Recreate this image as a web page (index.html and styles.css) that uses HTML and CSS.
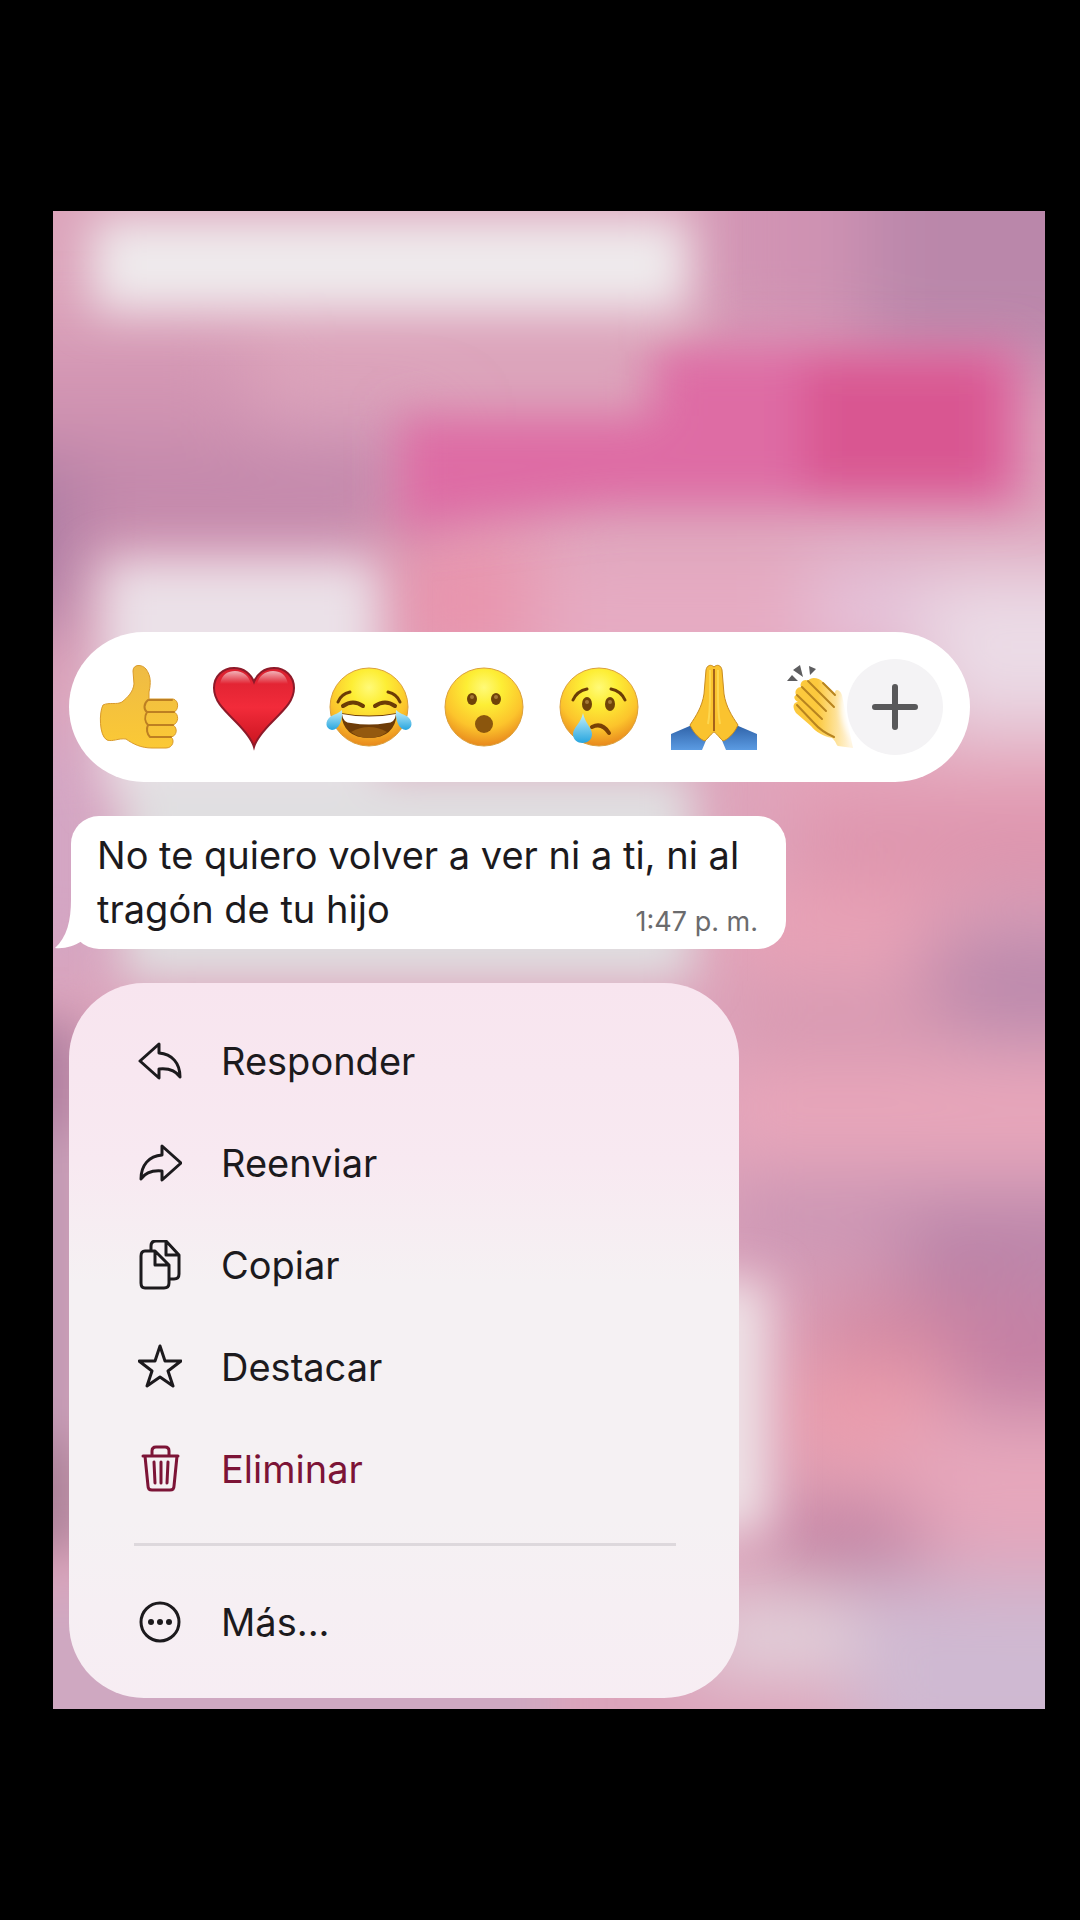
FILE: index.html
```html
<!DOCTYPE html>
<html lang="es">
<head>
    <meta charset="UTF-8">
    <meta name="viewport" content="width=device-width, initial-scale=1.0">
    <title>Mensaje</title>
    <link rel="stylesheet" href="styles.css">
</head>
<body>
    <main class="screen">
        <!-- Fondo del chat desenfocado -->
        <svg class="backdrop" viewBox="0 0 992 1498" preserveAspectRatio="none" aria-hidden="true">
            <defs>
                <filter id="soft" x="-50%" y="-50%" width="200%" height="200%"><feGaussianBlur stdDeviation="23"/></filter>
                <filter id="wide" x="-50%" y="-50%" width="200%" height="200%"><feGaussianBlur stdDeviation="38"/></filter>
            </defs>
            <rect width="992" height="1498" fill="#dca4bb"/>
            <g filter="url(#wide)">
                <rect x="655" y="-90" width="190" height="230" fill="#d093b3"/>
                <rect x="810" y="-90" width="280" height="250" fill="#ba87aa"/>
                <rect x="-90" y="130" width="290" height="130" fill="#d294b2"/>
                <rect x="200" y="210" width="180" height="60" fill="#d79bbb"/>
                <rect x="-60" y="230" width="420" height="110" fill="#c388ab"/>
                <rect x="-90" y="250" width="110" height="170" fill="#aa7aa2"/>
                <rect x="-90" y="520" width="150" height="240" fill="#d3a6c4"/>
                <rect x="340" y="320" width="160" height="140" fill="#e994ad"/>
                <rect x="480" y="340" width="340" height="140" fill="#e6abc2"/>
                <rect x="760" y="350" width="310" height="90" fill="#e5c5dc"/>
                <rect x="870" y="360" width="230" height="160" fill="#ebdbe6"/>
                <rect x="700" y="545" width="390" height="50" fill="#e8a4ba"/>
                <rect x="740" y="595" width="350" height="80" fill="#db93ac"/>
                <rect x="680" y="670" width="220" height="90" fill="#e9a2b6"/>
                <rect x="870" y="720" width="220" height="110" fill="#bc89ac"/>
                <rect x="680" y="785" width="220" height="55" fill="#d695ae"/>
                <rect x="660" y="860" width="430" height="80" fill="#eaa6ba"/>
                <rect x="670" y="970" width="420" height="80" fill="#ca94b3"/>
                <rect x="850" y="1000" width="240" height="80" fill="#b983a8"/>
                <rect x="760" y="1080" width="200" height="70" fill="#d086a1"/>
                <rect x="900" y="1090" width="190" height="110" fill="#c47fa3"/>
                <rect x="730" y="1150" width="160" height="110" fill="#ea9cac"/>
                <rect x="840" y="1220" width="250" height="110" fill="#e7a7bc"/>
                <rect x="720" y="1300" width="150" height="60" fill="#bc799c"/>
                <rect x="640" y="1390" width="200" height="70" fill="#e3dae1"/>
                <rect x="800" y="1370" width="290" height="190" fill="#cfb9d2"/>
            </g>
            <g filter="url(#soft)">
                <rect x="40" y="8" width="595" height="92" fill="#efebed"/>
                <path d="M345 205H600V135H970V295H560L345 320Z" fill="#de6ca4"/>
                <rect x="750" y="150" width="195" height="130" fill="#d95791"/>
                <rect x="50" y="350" width="275" height="235" fill="#ebe1e8"/>
                <rect x="70" y="560" width="570" height="210" fill="#e0dfe1"/>
                <rect x="590" y="1070" width="125" height="250" fill="#eee2e6"/>
                <rect x="-60" y="810" width="90" height="110" fill="#b080a0"/>
                <rect x="-60" y="920" width="90" height="360" fill="#c19ab4"/>
                <rect x="-60" y="1230" width="90" height="110" fill="#ab8299"/>
                <rect x="-60" y="1380" width="560" height="180" fill="#cfa8c1"/>
            </g>
        </svg>

        <div class="reactions" role="toolbar" aria-label="Reacciones">
            <button class="reaction" aria-label="Me gusta">
                <svg viewBox="0 0 80 86">
                    <defs>
                        <linearGradient id="hand" x1="0" y1="0" x2="0" y2="1">
                            <stop offset="0" stop-color="#eebb45"/>
                            <stop offset="1" stop-color="#fbc935"/>
                        </linearGradient>
                    </defs>
                    <path d="M4 41C10 38 18 41 23 38C29 33 34 28 35 20L34 7C34 0 43 0 47 5C52 12 52 19 50 28L50 35H74C80 36 80 46 75 48C80 50 80 59 74 61C79 64 78 72 72 73C76 76 74 84 67 84H53C42 84 34 80 27 75C19 74 14 78 8 76C0 72 0 48 4 41Z" fill="url(#hand)" stroke="#d99a2b" stroke-width="1"/>
                    <path d="M49 36C44 40 45 46 48 48C45 53 46 58 49 61C47 65 48 70 51 73M50 36H73M48 48H75M49 61H74M51 73H72" fill="none" stroke="#bd7f22" stroke-width="2" stroke-linecap="round"/>
                </svg>
            </button>
            <button class="reaction" aria-label="Me encanta">
                <svg viewBox="0 0 80 86">
                    <defs>
                        <linearGradient id="heart" x1="0" y1="0" x2="0" y2="1">
                            <stop offset="0" stop-color="#d9202f"/>
                            <stop offset=".5" stop-color="#f22b3a"/>
                            <stop offset="1" stop-color="#c9141f"/>
                        </linearGradient>
                        <linearGradient id="shine" x1="0" y1="0" x2="0" y2="1">
                            <stop offset="0" stop-color="#fff" stop-opacity=".65"/>
                            <stop offset="1" stop-color="#fff" stop-opacity="0"/>
                        </linearGradient>
                    </defs>
                    <path d="M40 83C38 76 31 67 21 57C8 44 0 36 0 24C0 12 9 4 20 4C30 4 37 10 40 18C43 10 50 4 60 4C71 4 80 12 80 24C80 36 72 44 59 57C49 67 42 76 40 83Z" fill="url(#heart)" stroke="#8d1a29" stroke-width="2"/>
                    <path d="M6 20C8 10 14 7 21 7C29 7 35 12 37 20Z M43 20C45 12 51 7 59 7C66 7 72 10 74 20Z" fill="url(#shine)"/>
                </svg>
            </button>
            <button class="reaction" aria-label="Me divierte">
                <svg viewBox="0 0 80 86">
                    <defs>
                        <radialGradient id="face" cx=".5" cy=".25" r=".75">
                            <stop offset="0" stop-color="#fffa78"/>
                            <stop offset=".3" stop-color="#fdee35"/>
                            <stop offset=".7" stop-color="#fcc42c"/>
                            <stop offset="1" stop-color="#e8881d"/>
                        </radialGradient>
                        <linearGradient id="tear" x1="0" y1="0" x2="0" y2="1">
                            <stop offset="0" stop-color="#c4f0fb"/>
                            <stop offset="1" stop-color="#27a5df"/>
                        </linearGradient>
                    </defs>
                    <circle cx="40" cy="43" r="39" fill="url(#face)" stroke="#dba03b" stroke-width="1"/>
                    <path d="M9 38Q12 30 21 28M59 28Q68 30 71 38" fill="none" stroke="#6b3c06" stroke-width="3" stroke-linecap="round"/>
                    <path d="M14 42Q24 35 34 42M46 42Q56 35 66 42" fill="none" stroke="#6b3c06" stroke-width="4" stroke-linecap="round"/>
                    <path d="M12 49Q40 54 68 49Q66 74 40 74Q14 74 12 49Z" fill="#6e3c07"/>
                    <path d="M13 50Q40 55 67 50Q66 59 58 59Q40 62 22 59Q14 59 13 50Z" fill="#fff"/>
                    <path d="M22 68Q40 58 58 68Q50 74 40 74Q30 74 22 68Z" fill="#94590f"/>
                    <path d="M13 46C14 56 10 66 3 66C-4 65-4 57 1 53C5 50 9 50 13 46ZM67 46C66 56 70 66 77 66C84 65 84 57 79 53C75 50 71 50 67 46Z" fill="url(#tear)"/>
                </svg>
            </button>
            <button class="reaction" aria-label="Me asombra">
                <svg viewBox="0 0 80 86">
                    <circle cx="40" cy="43" r="39" fill="url(#face)" stroke="#dba03b" stroke-width="1"/>
                    <ellipse cx="28" cy="35" rx="5" ry="6" fill="#6f4309"/>
                    <ellipse cx="52" cy="35" rx="5" ry="6" fill="#6f4309"/>
                    <circle cx="28" cy="33" r="2" fill="#a47937"/>
                    <circle cx="52" cy="33" r="2" fill="#a47937"/>
                    <circle cx="40" cy="60" r="9" fill="#8b560d"/>
                </svg>
            </button>
            <button class="reaction" aria-label="Me entristece">
                <svg viewBox="0 0 80 86">
                    <circle cx="40" cy="43" r="39" fill="url(#face)" stroke="#dba03b" stroke-width="1"/>
                    <path d="M14 36Q18 27 28 25M52 25Q62 27 66 36" fill="none" stroke="#6b3c06" stroke-width="3" stroke-linecap="round"/>
                    <ellipse cx="28" cy="40" rx="5" ry="7" fill="#6f4309"/>
                    <ellipse cx="51" cy="40" rx="5" ry="7" fill="#6f4309"/>
                    <circle cx="28" cy="38" r="2" fill="#a47937"/>
                    <circle cx="51" cy="38" r="2" fill="#a47937"/>
                    <path d="M33 63Q43 58 50 69" fill="none" stroke="#784006" stroke-width="4" stroke-linecap="round"/>
                    <path d="M24 49C26 59 33 64 33 70C33 82 14 82 14 70C14 64 22 59 24 49Z" fill="url(#tear)"/>
                </svg>
            </button>
            <button class="reaction" aria-label="Gracias">
                <svg viewBox="0 0 80 86">
                    <defs>
                        <linearGradient id="sleeve" x1="0" y1="0" x2="0" y2="1">
                            <stop offset="0" stop-color="#2f62a8"/>
                            <stop offset="1" stop-color="#5b9be2"/>
                        </linearGradient>
                    </defs>
                    <path d="M-3 70L18 61L33 74L28 86H-3ZM83 70L62 61L47 74L52 86H83Z" fill="url(#sleeve)"/>
                    <path d="M40 3C37 0 33 1 32 6L30 30C28 43 22 52 16 61C20 70 27 76 31 77C35 73 38 69 40 68C42 69 45 73 49 77C53 76 60 70 64 61C58 52 52 43 50 30L48 6C47 1 43 0 40 3Z" fill="#fac32f" stroke="#c98c20" stroke-width="1"/>
                    <path d="M40 5V67" stroke="#a5621a" stroke-width="2"/>
                    <path d="M36 6V28C36 40 36 50 34 60M44 6V28C44 40 44 50 46 60" fill="none" stroke="#fdd750" stroke-width="2"/>
                </svg>
            </button>
            <button class="reaction" aria-label="Aplausos">
                <svg viewBox="0 0 80 86">
                    <defs>
                        <linearGradient id="clap" x1="0" y1="0" x2="1" y2="0">
                            <stop offset=".4" stop-color="#fcc93d"/>
                            <stop offset=".95" stop-color="#fff4dc"/>
                        </linearGradient>
                    </defs>
                    <path d="M-2 17L3 11L9 17ZM4 6L11 1L14 13ZM20 2L27 5L21 11Z" fill="#5e5e60"/>
                    <path d="M7 31C5 26 9 23 12 23C10 18 16 14 19 17C22 12 30 14 34 18L46 29C46 24 51 26 53 31L64 84L49 82C47 81 47 77 43 74C34 72 27 68 22 62L7 49C3 43 4 38 9 38C4 35 5 32 7 31Z" fill="url(#clap)"/>
                    <path d="M13 23L37 47M19 17L45 43M8 31L33 55M8 41L25 59C31 66 38 70 45 73M34 19L46 31" fill="none" stroke="#b8841f" stroke-width="2" stroke-linecap="round"/>
                </svg>
            </button>
            <button class="more-reactions" aria-label="Más reacciones">
                <svg viewBox="0 0 96 96"><path d="M48 28V68M28 48H68" stroke="#58585a" stroke-width="6" stroke-linecap="round"/></svg>
            </button>
        </div>

        <article class="bubble">
            <svg class="tail" viewBox="0 0 40 50" aria-hidden="true"><path d="M17 0C17 22 13 38 1 49C11 50 20 47 28 42L40 30V0Z" fill="#fff"/></svg>
            <p class="message">No te quiero volver a ver ni a ti, ni al tragón de tu hijo <time class="time" datetime="13:47">1:47 p. m.</time></p>
        </article>

        <nav class="menu">
            <button class="item">
                <svg class="icon" viewBox="0 0 44 50"><path d="M21 8L2 25L21 42V33C31 32 38 35 42 41C42 27 34 18 21 17Z"/></svg>
                Responder
            </button>
            <button class="item">
                <svg class="icon" viewBox="0 0 44 50"><path d="M24 8L43 25L24 42V33C13 32 7 35 3 41C3 27 11 18 24 17Z"/></svg>
                Reenviar
            </button>
            <button class="item">
                <svg class="icon" viewBox="0 0 44 50"><path d="M13 10V6Q13 1 18 1H28L41 15V34Q41 39 36 39H32M28 1V15H41M7 11H17L31 25V43Q31 48 26 48H7Q3 48 3 43V16Q3 11 7 11ZM17 11V25H31"/></svg>
                Copiar
            </button>
            <button class="item">
                <svg class="icon" viewBox="0 0 44 50"><path d="M22 4L27 19H43L30 29L35 44L22 35L9 44L14 29L1 19H17Z"/></svg>
                Destacar
            </button>
            <button class="item danger">
                <svg class="icon" viewBox="0 0 44 50"><path d="M5 12H40M14 12V7Q14 3 18 3H27Q31 3 31 7V12M7 12L10 42Q10 46 14 46H32Q36 46 36 42L39 12M16 18L17 39M23 18V39M30 18L29 39"/></svg>
                Eliminar
            </button>
            <hr class="divider">
            <button class="item">
                <svg class="icon" viewBox="0 0 44 50"><circle cx="22" cy="25" r="19"/><circle class="dot" cx="13" cy="25" r="3"/><circle class="dot" cx="22" cy="25" r="3"/><circle class="dot" cx="31" cy="25" r="3"/></svg>
                Más...
            </button>
        </nav>
    </main>
</body>
</html>
```
FILE: styles.css
```css
* {
    box-sizing: border-box;
}
body {
    margin: 0;
    padding: 211px 35px 211px 53px;
    background-color: #000;
    color: #1c1a1d;
    font-family: Inter, "Liberation Sans", sans-serif;
    font-size: 38px;
}
button {
    border: none;
    padding: 0;
    background: none;
    color: inherit;
    font: inherit;
    cursor: pointer;
}
.screen {
    position: relative;
    display: flex;
    flex-direction: column;
    align-items: flex-start;
    gap: 34px;
    padding: 421px 16px 11px;
    overflow: hidden;
}
.backdrop {
    position: absolute;
    inset: 0;
    width: 100%;
    height: 100%;
}
.reactions {
    position: relative;
    display: flex;
    align-items: center;
    gap: 35px;
    width: 100%;
    max-width: 901px;
    padding: 32px 30px;
    background-color: #fff;
    border-radius: 75px;
}
.reaction {
    flex: none;
    width: 80px;
    height: 86px;
}
.reaction svg {
    display: block;
    overflow: visible;
}
.more-reactions {
    position: absolute;
    top: 27px;
    right: 27px;
    width: 96px;
    height: 96px;
    border-radius: 50%;
    background-color: #f4f3f5;
    box-shadow: 0 0 6px 6px #fff;
}
.bubble {
    position: relative;
    max-width: 715px;
    margin-left: 2px;
    padding: 12px 26px 13px;
    background-color: #fff;
    border-radius: 28px;
}
.tail {
    position: absolute;
    left: -17px;
    bottom: 0;
    width: 40px;
    height: 50px;
}
.message {
    position: relative;
    margin: 0;
    line-height: 54px;
}
.time {
    float: right;
    margin: 26px 2px 0 0;
    color: #6b6b6d;
    font-size: 27px;
    line-height: 28px;
}
.menu {
    position: relative;
    width: 100%;
    max-width: 670px;
    padding: 27px 63px 25px 65px;
    background: linear-gradient(#f8e5ef, #f8e9f1 25%, #f5f1f3 42%, #f5f1f3 75%, #f7edf3);
    border-radius: 75px;
}
.item {
    display: flex;
    align-items: center;
    gap: 39px;
    width: 100%;
    height: 102px;
    padding-left: 4px;
    text-align: left;
}
.icon {
    flex: none;
    width: 44px;
    height: 50px;
    fill: none;
    stroke: currentColor;
    stroke-width: 3;
    stroke-linecap: round;
    stroke-linejoin: round;
}
.dot {
    fill: currentColor;
    stroke: none;
}
.danger {
    color: #7c1436;
}
.divider {
    height: 3px;
    margin: 23px 0 25px;
    border: none;
    background-color: #ddd8dc;
}
```
